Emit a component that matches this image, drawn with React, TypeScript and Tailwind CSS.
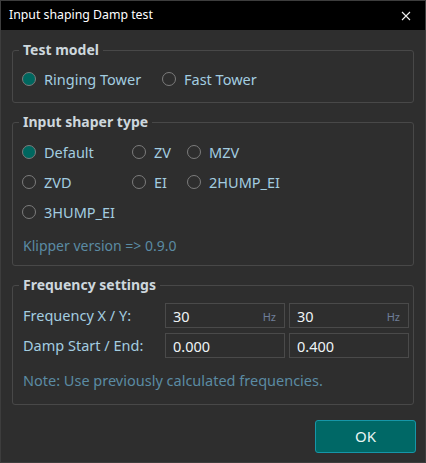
import React from "react";

const font = { fontFamily: '"Noto Sans", "Open Sans", sans-serif' };

function Radio({ checked, label }: { checked?: boolean; label: string }) {
  return (
    <div className="flex items-center h-[20px]">
      <span
        className={
          "w-[14px] h-[14px] rounded-full border border-[#7c7c7c] shrink-0 " +
          (checked ? "bg-[#00675f]" : "bg-transparent")
        }
      />
      <span className="ml-[8px] text-[14.5px] text-[#a3cde0] leading-[20px] whitespace-nowrap">{label}</span>
    </div>
  );
}

function Group({ title, children, className }: { title: string; children: React.ReactNode; className?: string }) {
  return (
    <fieldset className={"border border-[#484848] rounded-[3px] mx-[11px] " + (className ?? "")}>
      <legend className="ml-[6px] px-[4px] text-[14px] font-bold text-[#cdd7dd] leading-[20px]">{title}</legend>
      {children}
    </fieldset>
  );
}

function Input({ value, unit }: { value: string; unit?: string }) {
  return (
    <div className="w-[120px] h-[25px] border border-[#4a4a4a] flex items-center justify-between pl-[7px] pr-[8px]">
      <span className="text-[14.5px] text-[#eef4f6] leading-[20px]">{value}</span>
      {unit && <span className="text-[11px] text-[#6f7e99] mt-[3px]">{unit}</span>}
    </div>
  );
}

export default function App() {
  return (
    <div className="w-[426px] h-[463px] border border-[#3d3d3d] bg-[#2e2e2e] flex flex-col" style={font}>
      <div className="h-[29px] bg-black flex items-center justify-between pl-[8px] pr-[14px] shrink-0">
        <span className="text-[12.3px] text-white">Input shaping Damp test</span>
        <svg width="10" height="10" viewBox="0 0 10 10">
          <path d="M1 1 L9 9 M9 1 L1 9" stroke="#f0f0f0" strokeWidth="1.1" />
        </svg>
      </div>

      <Group title="Test model" className="mt-[10px]">
        <div className="flex items-center pl-[9px] pt-[9px] pb-[13px]">
          <div className="w-[140px]">
            <Radio checked label="Ringing Tower" />
          </div>
          <Radio label="Fast Tower" />
        </div>
      </Group>

      <Group title="Input shaper type" className="mt-[9px]">
        <div className="pl-[9px] pt-[10px] grid grid-cols-[110px_55px_auto] gap-y-[10px]">
          <Radio checked label="Default" />
          <Radio label="ZV" />
          <Radio label="MZV" />
          <Radio label="ZVD" />
          <Radio label="EI" />
          <Radio label="2HUMP_EI" />
          <Radio label="3HUMP_EI" />
        </div>
        <div className="pl-[10px] mt-[14px] pb-[9px] text-[14px] leading-[20px] text-[#5b8ba3]">Klipper version =&gt; 0.9.0</div>
      </Group>

      <Group title="Frequency settings" className="mt-[9px]">
        <div className="pl-[10px] pt-[8px] flex flex-col gap-[5px]">
          <div className="flex items-center">
            <span className="w-[142px] text-[14.5px] text-[#a3cde0]">Frequency X / Y:</span>
            <Input value="30" unit="Hz" />
            <div className="w-[4px]" />
            <Input value="30" unit="Hz" />
          </div>
          <div className="flex items-center">
            <span className="w-[142px] text-[14.5px] text-[#a3cde0]">Damp Start / End:</span>
            <Input value="0.000" />
            <div className="w-[4px]" />
            <Input value="0.400" />
          </div>
        </div>
        <div className="pl-[10px] mt-[12px] pb-[14px] text-[14.5px] leading-[20px] text-[#5b8ba3]">
          Note: Use previously calculated frequencies.
        </div>
      </Group>

      <div className="flex-1 flex items-end justify-end pr-[9px] pb-[9px]">
        <button className="w-[101px] h-[33px] rounded-[3px] bg-[#006866] border border-[#1696a8] text-[15px] text-[#eaf6f4]">
          OK
        </button>
      </div>
    </div>
  );
}
